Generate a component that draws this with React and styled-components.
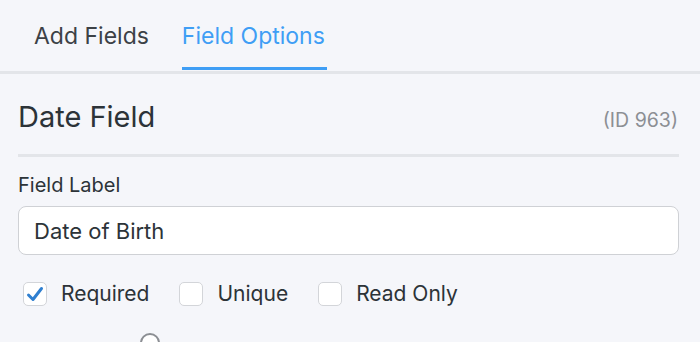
import React from "react";
import styled, { createGlobalStyle } from "styled-components";

const Global = createGlobalStyle`
  html, body {
    margin: 0;
    padding: 0;
    background: #f5f6fa;
  }
  body {
    font-family: Inter, "Noto Sans", sans-serif;
    color: #2c3338;
    overflow: hidden;
  }
`;

const Page = styled.div`
  width: 700px;
  height: 342px;
  overflow: hidden;
  background: #f5f6fa;
`;

const Tabs = styled.div`
  display: flex;
  gap: 33px;
  padding-left: 34px;
  border-bottom: 3px solid #e3e5e9;
`;

const Tab = styled.div`
  font-size: 23px;
  line-height: 26px;
  padding: 23px ${(p) => (p.$active ? "2px" : "0")} 18px 0;
  color: ${(p) => (p.$active ? "#3f9ef5" : "#3c4146")};
  border-bottom: 3px solid ${(p) => (p.$active ? "#3f9ef5" : "transparent")};
  margin-bottom: 1px;
`;

const Panel = styled.div`
  padding: 0 21px 0 18px;
`;

const TitleRow = styled.div`
  display: flex;
  justify-content: space-between;
  align-items: baseline;
  padding: 25px 0 19px;
  border-bottom: 3px solid #e3e5e9;
`;

const Title = styled.h2`
  margin: 0;
  font-size: 29px;
  font-weight: 400;
  line-height: 36px;
  color: #2c3338;
`;

const FieldId = styled.span`
  font-size: 19.5px;
  color: #8c8f94;
  margin-right: 1px;
`;

const Label = styled.label`
  display: block;
  font-size: 20px;
  line-height: 24px;
  margin: 16px 0 9px;
`;

const Input = styled.input`
  display: block;
  box-sizing: border-box;
  width: 100%;
  height: 49px;
  padding: 0 15px;
  font-family: inherit;
  font-size: 22px;
  color: #2c3338;
  background: #fff;
  border: 1px solid #cfd1d5;
  border-radius: 8px;
  outline: none;
`;

const Options = styled.div`
  display: flex;
  align-items: center;
  gap: 30px;
  padding: 27px 0 0 5px;
`;

const Option = styled.label`
  display: flex;
  align-items: center;
  gap: 14px;
  font-size: 21px;
  line-height: 24px;
`;

const Box = styled.span`
  display: flex;
  align-items: center;
  justify-content: center;
  box-sizing: border-box;
  width: 24px;
  height: 24px;
  background: #fff;
  border: 1px solid #d3d5d9;
  border-radius: 5px;
`;

const RadioRow = styled.div`
  display: flex;
  padding: 27px 0 0 122px;
`;

const Radio = styled.span`
  box-sizing: border-box;
  width: 20px;
  height: 20px;
  border: 2px solid #8c8f94;
  border-radius: 50%;
  background: #fff;
`;

function Check({ checked, label }) {
  return (
    <Option>
      <Box>
        {checked && (
          <svg width="20" height="20" viewBox="0 0 20 20">
            <path
              d="M3.5 11 L8 15.5 L16.5 4.5"
              fill="none"
              stroke="#2f7fd0"
              strokeWidth="3"
              strokeLinecap="round"
              strokeLinejoin="round"
            />
          </svg>
        )}
      </Box>
      {label}
    </Option>
  );
}

export default function App() {
  return (
    <Page>
      <Global />
      <Tabs>
        <Tab>Add Fields</Tab>
        <Tab $active>Field Options</Tab>
      </Tabs>
      <Panel>
        <TitleRow>
          <Title>Date Field</Title>
          <FieldId>(ID 963)</FieldId>
        </TitleRow>
        <Label>Field Label</Label>
        <Input defaultValue="Date of Birth" />
        <Options>
          <Check checked label="Required" />
          <Check label="Unique" />
          <Check label="Read Only" />
        </Options>
        <RadioRow>
          <Radio />
        </RadioRow>
      </Panel>
    </Page>
  );
}
